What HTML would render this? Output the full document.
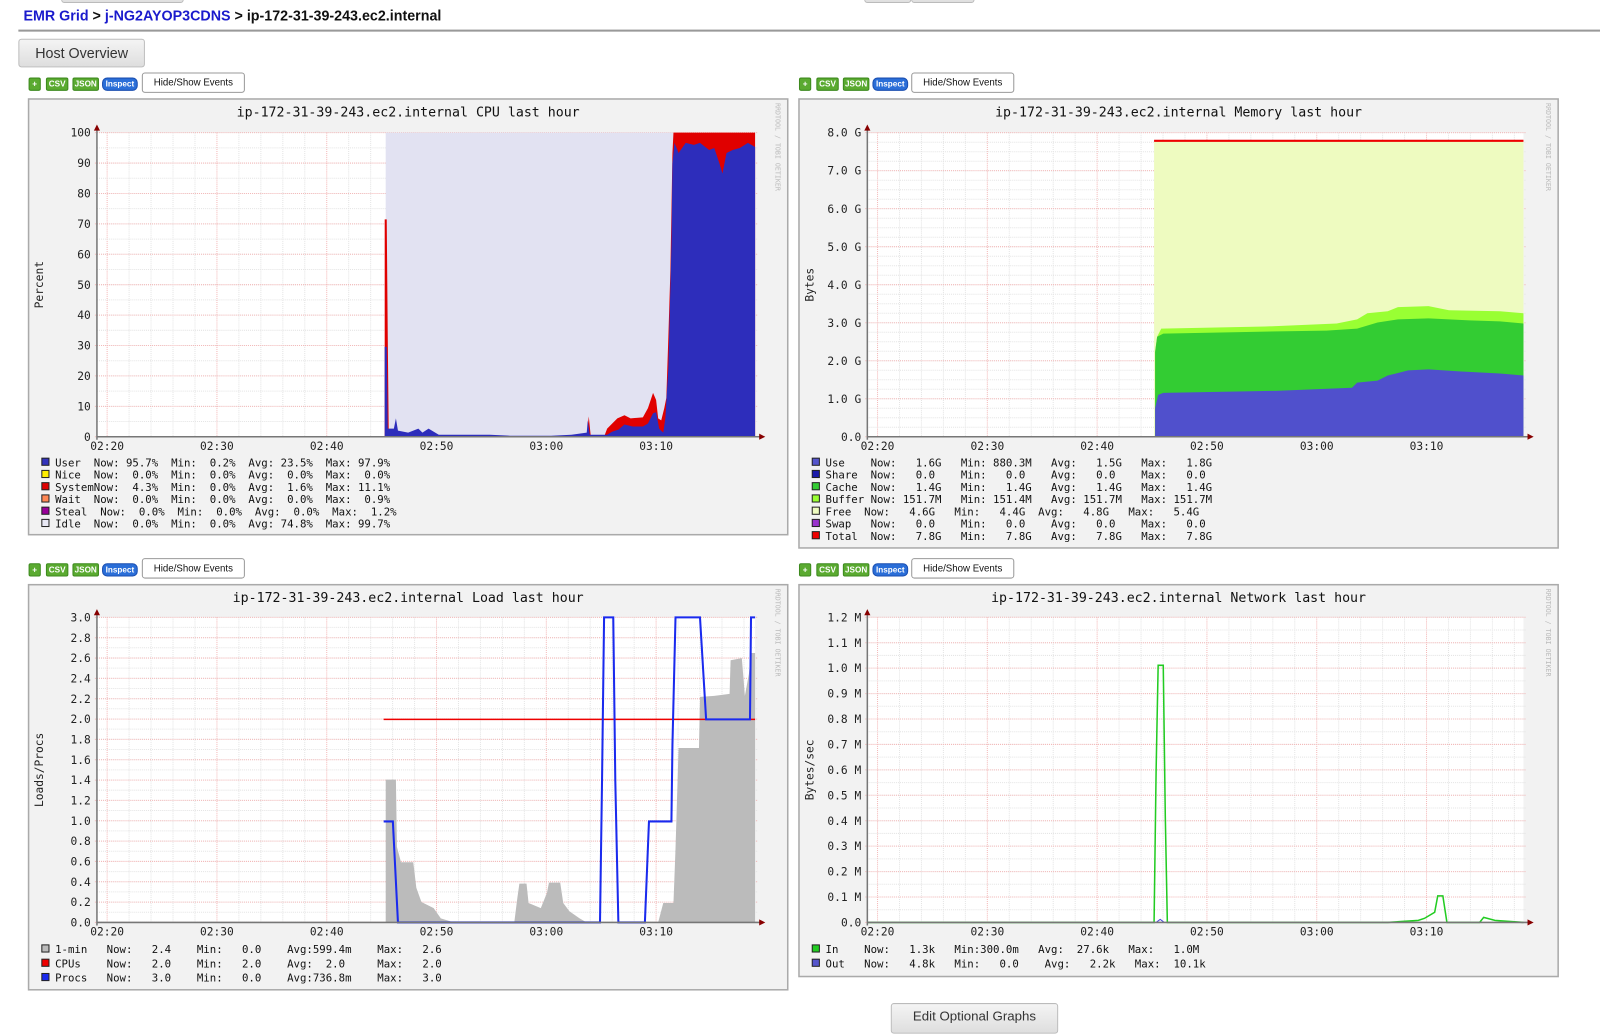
<!DOCTYPE html>
<html><head><meta charset="utf-8">
<style>
html,body{margin:0;padding:0;background:#fff;overflow:hidden;width:1600px;height:1017px}
#w{position:absolute;left:0;top:0;width:1568px;height:997px;transform:scale(1.0204);transform-origin:0 0;font-family:"Liberation Sans",Verdana,sans-serif}
.crumb{position:absolute;left:23px;top:7px;font-size:14px;font-weight:bold;color:#111}
.crumb a{color:#1a1acc;text-decoration:none}
.hr{position:absolute;left:18px;top:29px;width:1560px;height:2px;background:#999}
.btn{position:absolute;background:linear-gradient(#f4f4f4,#dedede);border:1px solid #bbb;border-radius:3px;color:#333;box-sizing:border-box;text-align:center}
.tb{position:absolute;height:11px;font-size:8px;line-height:11px;color:#fff;border-radius:2px;text-align:center;font-weight:bold}
.g{background:#5aaa30;border:1px solid #3d8a1e}
.b{background:#2a6ed8;border:1px solid #1a4eb0}
.hs{position:absolute;height:20px;border:1px solid #999;border-radius:3px;background:#fff;font-size:9.5px;line-height:19px;text-align:center;box-sizing:border-box;color:#111}
svg text{font-family:"DejaVu Sans Mono","Liberation Mono",monospace}
</style></head><body>
<div id="w">
<div class="btn" style="left:60px;top:-10px;width:120px;height:13px"></div>
<div class="btn" style="left:847px;top:-10px;width:46px;height:13px"></div>
<div class="btn" style="left:893px;top:-10px;width:62px;height:13px"></div>
<div class="crumb"><a>EMR Grid</a> &gt; <a>j-NG2AYOP3CDNS</a> &gt; ip-172-31-39-243.ec2.internal</div>
<div class="hr"></div>
<div class="btn" style="left:18px;top:38px;width:124px;height:28px;font-size:14px;line-height:26px">Host Overview</div>

<div class="tb g" style="left:28px;top:76px;width:10px">+</div>
<div class="tb g" style="left:45px;top:76px;width:20px">CSV</div>
<div class="tb g" style="left:71px;top:76px;width:24px">JSON</div>
<div class="tb b" style="left:100px;top:76px;width:33px;border-radius:5px">Inspect</div>
<div class="hs" style="left:139px;top:71px;width:101px">Hide/Show Events</div>

<div class="tb g" style="left:783px;top:76px;width:10px">+</div>
<div class="tb g" style="left:800px;top:76px;width:20px">CSV</div>
<div class="tb g" style="left:826px;top:76px;width:24px">JSON</div>
<div class="tb b" style="left:855px;top:76px;width:33px;border-radius:5px">Inspect</div>
<div class="hs" style="left:893px;top:71px;width:101px">Hide/Show Events</div>

<div class="tb g" style="left:28px;top:552px;width:10px">+</div>
<div class="tb g" style="left:45px;top:552px;width:20px">CSV</div>
<div class="tb g" style="left:71px;top:552px;width:24px">JSON</div>
<div class="tb b" style="left:100px;top:552px;width:33px;border-radius:5px">Inspect</div>
<div class="hs" style="left:139px;top:547px;width:101px">Hide/Show Events</div>

<div class="tb g" style="left:783px;top:552px;width:10px">+</div>
<div class="tb g" style="left:800px;top:552px;width:20px">CSV</div>
<div class="tb g" style="left:826px;top:552px;width:24px">JSON</div>
<div class="tb b" style="left:855px;top:552px;width:33px;border-radius:5px">Inspect</div>
<div class="hs" style="left:893px;top:547px;width:101px">Hide/Show Events</div>

<div class="btn" style="left:873px;top:983px;width:164px;height:30px;font-size:13px;line-height:24px">Edit Optional Graphs</div>

<svg id="s" width="1568" height="997" style="position:absolute;left:0;top:0" xmlns="http://www.w3.org/2000/svg">
<g id="grids"></g>
<rect x="378" y="130" width="282" height="298" fill="#e2e2f2"/>
<path fill="#e00000" d="M377,428 L377,215 L379,215 L380,330 L381,428 L575,428 L577,408 L579,428 L592,428 L595,420 L600,415 L605,410 L612,407 L618,410 L630,409 L635,400 L640,385 L643,392 L645,410 L648,412 L651,400 L653,390 L655,330 L657,265 L659,150 L660,130 L740,130 L740,428 Z"/>
<path fill="#2d2dbb" d="M377,428 L377,340 L379,340 L380,420 L386,420 L388,410 L390,422 L400,424 L410,420 L414,424 L420,420 L430,426 L480,426 L500,427 L540,427 L560,426 L575,424 L576,412 L578,426 L595,426 L600,423 L606,421 L612,416 L620,418 L630,418 L635,415 L640,405 L643,404 L646,420 L650,424 L652,410 L655,360 L656,320 L658,240 L659,160 L661,140 L665,150 L672,140 L680,142 L686,140 L695,147 L700,145 L705,160 L708,170 L712,150 L718,147 L725,145 L733,140 L740,144 L740,428 Z"/>
<rect x="1131" y="138" width="362" height="290" fill="#eefbc0"/>
<path fill="#99ff33" d="M1132,428 L1132,345 L1134,330 L1138,322 L1240,320 L1310,317 L1330,313 L1340,307 L1360,305 L1370,301 L1400,300 L1420,304 L1470,305 L1493,307 L1493,428 Z"/>
<path fill="#33cc33" d="M1132,428 L1132,345 L1134,330 L1140,327 L1240,325 L1300,324 L1330,322 L1350,316 L1370,313 L1400,312 L1440,314 L1470,315 L1493,317 L1493,428 Z"/>
<path fill="#5050cc" d="M1132,428 L1132,400 L1135,387 L1140,385 L1250,383 L1325,380 L1330,375 L1350,373 L1360,368 L1380,363 L1400,362 L1430,364 L1470,366 L1493,368 L1493,428 Z"/>
<line x1="1131" y1="138" x2="1493" y2="138" stroke="#ee0000" stroke-width="2"/>
<path fill="#bbbbbb" d="M378,904 L378,764 L388,764 L389,830 L393,845 L405,845 L408,870 L413,884 L425,890 L432,900 L445,904 L504,904 L507,880 L509,866 L516,866 L518,885 L530,890 L536,875 L538,865 L549,865 L552,885 L558,893 L568,900 L575,904 L645,904 L650,885 L660,885 L662,832 L665,733 L685,733 L686,683 L700,682 L715,680 L716,647 L727,645 L730,682 L734,660 L736,640 L740,640 L740,904 Z"/>
<line x1="376" y1="705" x2="740" y2="705" stroke="#ee0000" stroke-width="1.5"/>
<polyline fill="none" stroke="#1a2aee" stroke-width="2" points="376,805 385,805 390,904 588,904 590,765 592,605 601,605 603,765 606,904 632,904 636,805 658,805 659,730 662,605 686,605 692,705 735,705 736,605 740,605"/>
<polyline fill="none" stroke="#22cc22" stroke-width="1.5" points="850,904 1131,904 1133,755 1135,652 1140,652 1142,800 1144,904 1360,904 1390,902 1396,900 1406,894 1409,878 1414,878 1418,904 1450,904 1454,899 1465,902 1493,904"/>
<polyline fill="none" stroke="#4444dd" stroke-width="1" points="1133,904 1137,901 1141,904"/>
<g id="axes"></g>
</svg>
</div>
<script>
var s=document.getElementById('grids'),ax=document.getElementById('axes'),NS='http://www.w3.org/2000/svg';
function el(p,t,a,txt){var e=document.createElementNS(NS,t);for(var k in a)e.setAttribute(k,a[k]);if(txt!=null){e.textContent=txt;e.setAttributeNS('http://www.w3.org/XML/1998/namespace','xml:space','preserve');}p.appendChild(e);return e;}
function panel(px0,py0,px1,py1,x0,y0,x1,y1,x20,ylabels,ystep,yminor,title,ytitle,legend,leg0,legStep,legCols){
  var bg=el(s,'rect',{x:px0,y:py0,width:px1-px0,height:py1-py0,fill:'#f2f2f2',stroke:'#aaa','stroke-width':1.5});
  s.insertBefore(bg,s.firstChild);
  el(s,'rect',{x:x0,y:y0,width:x1-x0,height:y1-y0,fill:'#fff'});
  var step=107.6/5;
  for(var i=-1;i<40;i++){var x=x20+i*step;if(x<x0||x>x1)continue;
    el(s,'line',{x1:x,y1:y0,x2:x,y2:y1,stroke:(i%5==0)?'#f4b8b8':'#e4e4e4','stroke-width':1,'stroke-dasharray':'1,1'});}
  for(var y=y1;y>=y0-0.5;y-=yminor){el(s,'line',{x1:x0,y1:y,x2:x1+3,y2:y,stroke:'#e4e4e4','stroke-dasharray':'1,1'});}
  for(var j=0;j<ylabels.length;j++){var y=y1-j*ystep;
    el(s,'line',{x1:x0-2,y1:y,x2:x1+3,y2:y,stroke:'#f4b8b8','stroke-dasharray':'1,1'});
    el(ax,'text',{x:x0-6,y:y+4,'font-size':11,'text-anchor':'end',fill:'#222'},ylabels[j]);}
  var tl=['02:20','02:30','02:40','02:50','03:00','03:10'];
  for(var k=0;k<6;k++){el(ax,'text',{x:x20+k*107.6,y:y1+13,'font-size':11,'text-anchor':'middle',fill:'#222'},tl[k]);}
  el(ax,'line',{x1:x0,y1:y1,x2:x1+5,y2:y1,stroke:'#777','stroke-width':1.5});
  el(ax,'line',{x1:x0,y1:y1+3,x2:x0,y2:y0-3,stroke:'#777','stroke-width':1.5});
  el(ax,'path',{d:'M'+(x1+4)+','+(y1-3)+' L'+(x1+10)+','+y1+' L'+(x1+4)+','+(y1+3)+'Z',fill:'#800'});
  el(ax,'path',{d:'M'+(x0-3)+','+(y0-2)+' L'+x0+','+(y0-8)+' L'+(x0+3)+','+(y0-2)+'Z',fill:'#800'});
  el(ax,'text',{x:(px0+px1)/2,y:py0+17,'font-size':13,'text-anchor':'middle',fill:'#111'},title);
  var cy=(y0+y1)/2;
  el(ax,'text',{x:0,y:0,'font-size':11,'text-anchor':'middle',fill:'#222',transform:'translate('+(px0+14)+','+cy+') rotate(-90)'},ytitle);
  el(ax,'text',{x:0,y:0,'font-size':6.5,fill:'#bbb',transform:'translate('+(px1-12)+','+(py0+4)+') rotate(90)'},'RRDTOOL / TOBI OETIKER');
  for(var m=0;m<legend.length;m++){var ly=leg0+m*legStep;
    el(ax,'rect',{x:px0+13,y:ly-8,width:7,height:7,fill:legCols[m],stroke:'#222','stroke-width':1});
    el(ax,'text',{x:px0+26,y:ly,'font-size':10.5,fill:'#111'},legend[m]);}
}
panel(28,97,772,524,95,130,740,428,105,['0','10','20','30','40','50','60','70','80','90','100'],29.8,14.9,
 'ip-172-31-39-243.ec2.internal CPU last hour','Percent',
 ['User  Now: 95.7%  Min:  0.2%  Avg: 23.5%  Max: 97.9%','Nice  Now:  0.0%  Min:  0.0%  Avg:  0.0%  Max:  0.0%','SystemNow:  4.3%  Min:  0.0%  Avg:  1.6%  Max: 11.1%','Wait  Now:  0.0%  Min:  0.0%  Avg:  0.0%  Max:  0.9%','Steal  Now:  0.0%  Min:  0.0%  Avg:  0.0%  Max:  1.2%','Idle  Now:  0.0%  Min:  0.0%  Avg: 74.8%  Max: 99.7%'],
 457,12,['#3333bb','#ffee00','#dd0000','#ff8855','#990099','#e8e8f4']);
panel(783,97,1527,537,850,130,1493,428,860,['0.0','1.0 G','2.0 G','3.0 G','4.0 G','5.0 G','6.0 G','7.0 G','8.0 G'],37.25,9.31,
 'ip-172-31-39-243.ec2.internal Memory last hour','Bytes',
 ['Use    Now:   1.6G   Min: 880.3M   Avg:   1.5G   Max:   1.8G','Share  Now:   0.0    Min:   0.0    Avg:   0.0    Max:   0.0','Cache  Now:   1.4G   Min:   1.4G   Avg:   1.4G   Max:   1.4G','Buffer Now: 151.7M   Min: 151.4M   Avg: 151.7M   Max: 151.7M','Free  Now:   4.6G   Min:   4.4G  Avg:   4.8G   Max:   5.4G','Swap   Now:   0.0    Min:   0.0    Avg:   0.0    Max:   0.0','Total  Now:   7.8G   Min:   7.8G   Avg:   7.8G   Max:   7.8G'],
 457,12,['#5555cc','#1a1aaa','#33cc33','#99ff33','#eefbc0','#9933cc','#ee0000']);
panel(28,573,772,970,95,605,740,904,105,['0.0','0.2','0.4','0.6','0.8','1.0','1.2','1.4','1.6','1.8','2.0','2.2','2.4','2.6','2.8','3.0'],19.93,9.97,
 'ip-172-31-39-243.ec2.internal Load last hour','Loads/Procs',
 ['1-min   Now:   2.4    Min:   0.0    Avg:599.4m    Max:   2.6','CPUs    Now:   2.0    Min:   2.0    Avg:  2.0     Max:   2.0','Procs   Now:   3.0    Min:   0.0    Avg:736.8m    Max:   3.0'],
 934,14,['#bbbbbb','#ee0000','#1a2aee']);
panel(783,573,1527,957,850,605,1493,904,860,['0.0','0.1 M','0.2 M','0.3 M','0.4 M','0.5 M','0.6 M','0.7 M','0.8 M','0.9 M','1.0 M','1.1 M','1.2 M'],24.92,12.46,
 'ip-172-31-39-243.ec2.internal Network last hour','Bytes/sec',
 ['In    Now:   1.3k   Min:300.0m   Avg:  27.6k   Max:   1.0M','Out   Now:   4.8k   Min:   0.0    Avg:   2.2k   Max:  10.1k'],
 934,14,['#22cc22','#5555cc']);
</script>
</body></html>
